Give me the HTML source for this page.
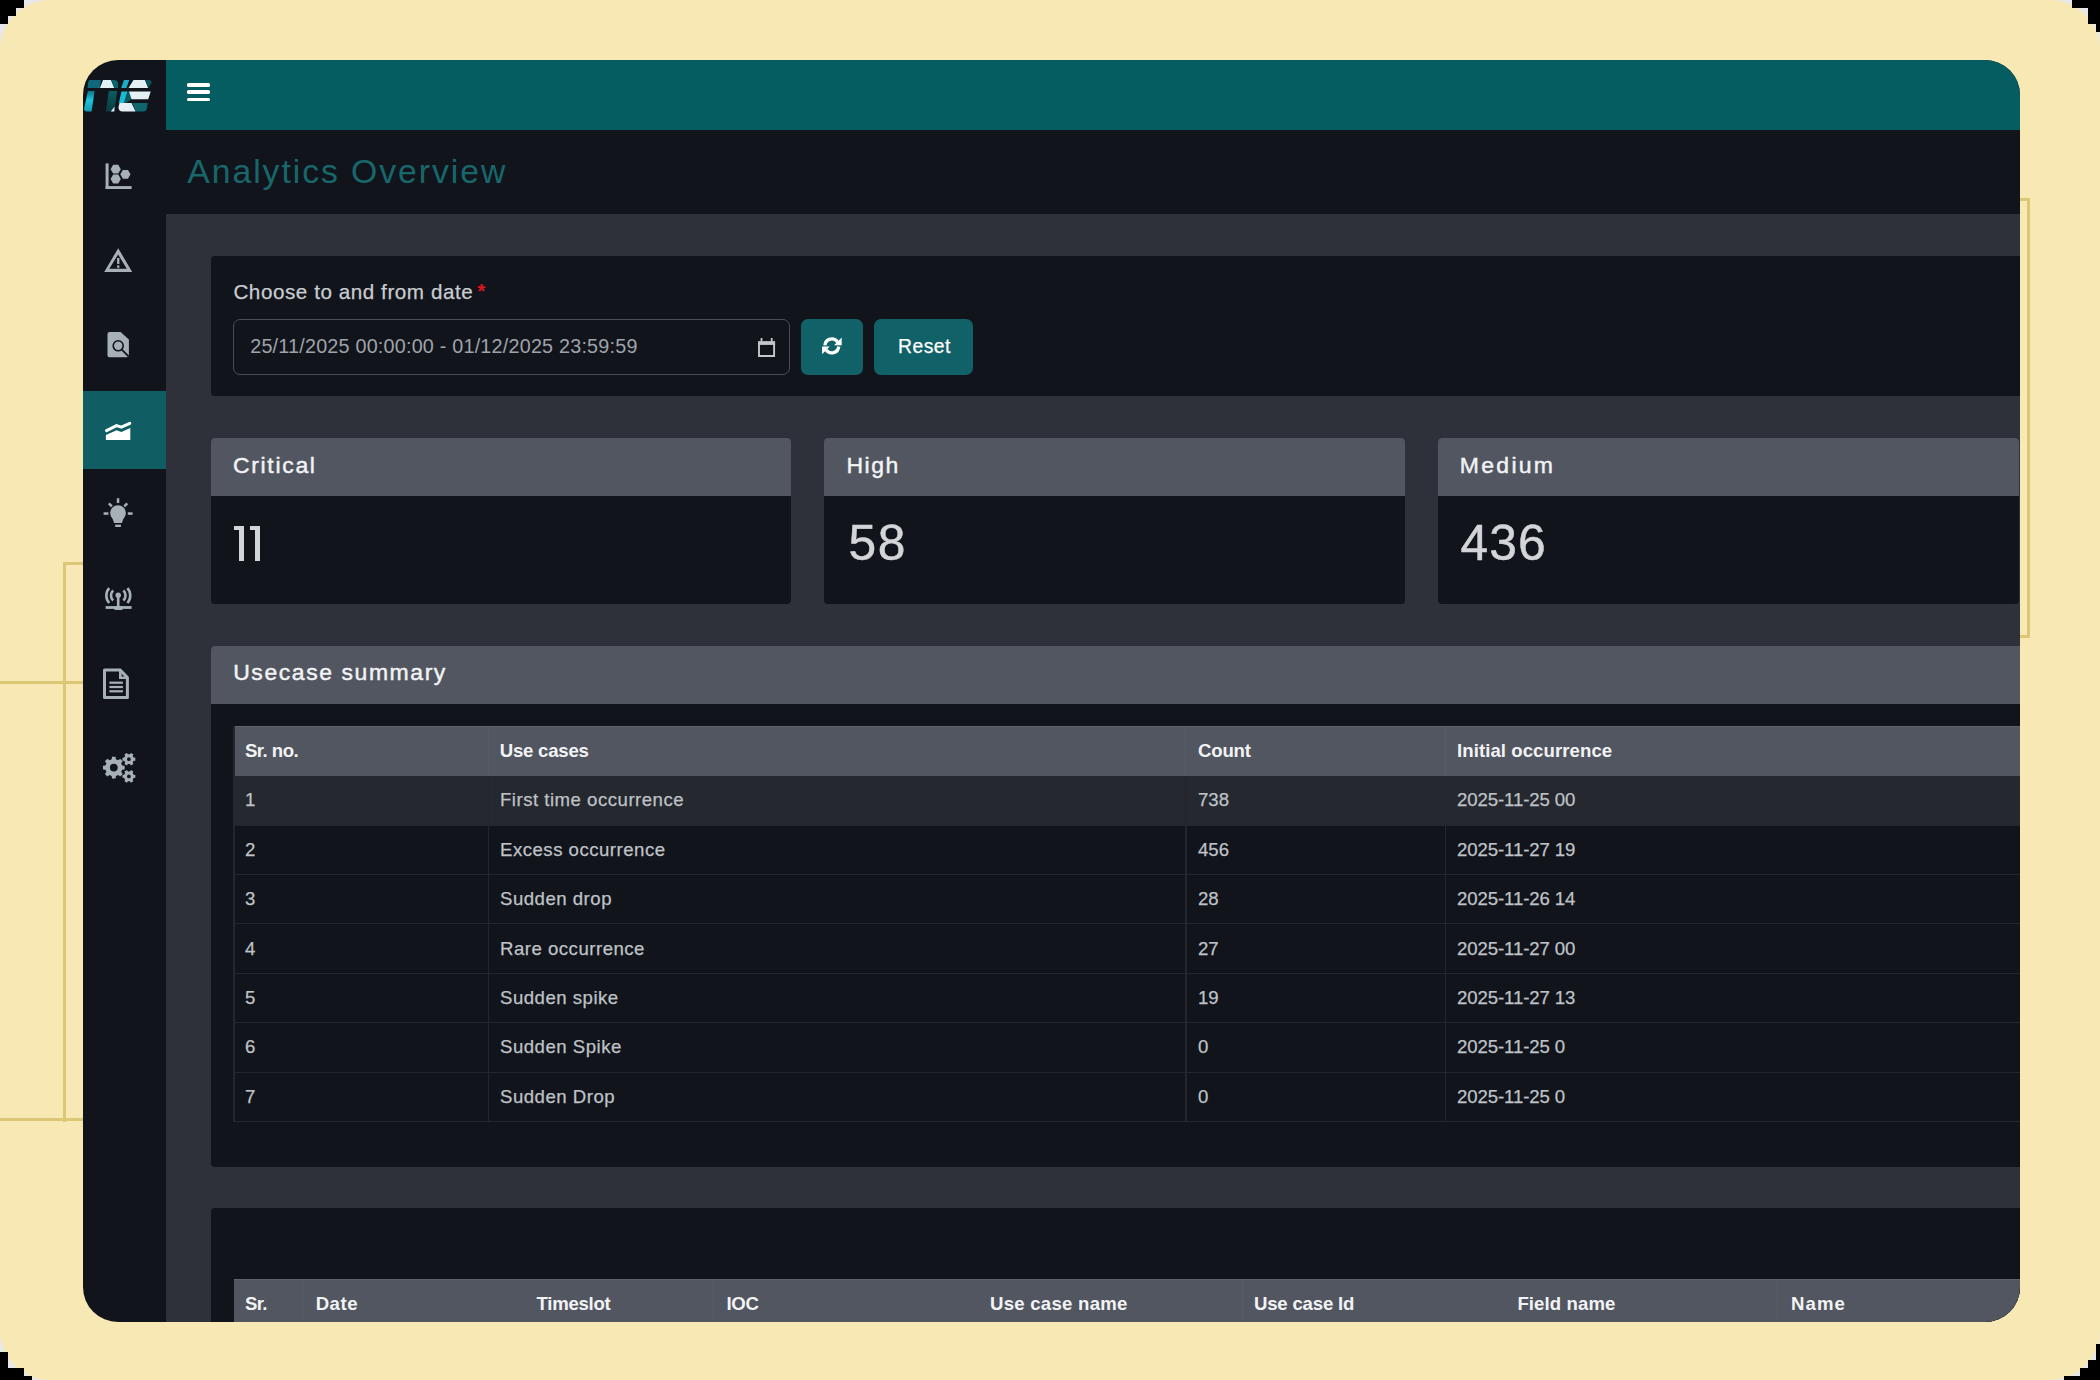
<!DOCTYPE html>
<html><head><meta charset="utf-8">
<style>
*{box-sizing:border-box;margin:0;padding:0}
html,body{width:2100px;height:1380px;overflow:hidden;background:#e8e7e9;font-family:"Liberation Sans",sans-serif}
.abs{position:absolute}
#outer{position:absolute;left:0;top:0;width:2100px;height:1380px;background:#f8e8b3;border-radius:50px}
.blk{position:absolute;background:#000}
.gl{position:absolute;background:#dcc777}
#frame{position:absolute;left:83px;top:60px;width:1937px;height:1262px;border-radius:35px;overflow:hidden;background:#11141b}
#in{position:absolute;left:-83px;top:-60px;width:2100px;height:1380px}
.r{position:absolute}
.t{position:absolute;white-space:nowrap;line-height:1}
</style></head><body>
<div id="outer"></div>
<div class="blk" style="left:0;top:0;width:24px;height:8px"></div>
<div class="blk" style="left:0;top:0;width:16px;height:16px"></div>
<div class="blk" style="left:0;top:0;width:8px;height:24px"></div>
<div class="blk" style="left:2072px;top:0;width:28px;height:8px"></div>
<div class="blk" style="left:2088px;top:0;width:12px;height:24px"></div>
<div class="blk" style="left:2096px;top:0;width:4px;height:32px"></div>
<div class="blk" style="left:0;top:1352px;width:8px;height:28px"></div>
<div class="blk" style="left:0;top:1368px;width:24px;height:12px"></div>
<div class="blk" style="left:0;top:1376px;width:32px;height:4px"></div>
<div class="blk" style="left:2096px;top:1344px;width:4px;height:36px"></div>
<div class="blk" style="left:2088px;top:1360px;width:12px;height:20px"></div>
<div class="blk" style="left:2080px;top:1368px;width:20px;height:12px"></div>
<div class="blk" style="left:2064px;top:1376px;width:36px;height:4px"></div>
<div class="gl" style="left:63px;top:562px;width:3px;height:560px"></div>
<div class="gl" style="left:63px;top:562px;width:22px;height:3px"></div>
<div class="gl" style="left:0;top:681px;width:85px;height:3px"></div>
<div class="gl" style="left:0;top:1118px;width:85px;height:3px"></div>
<div class="gl" style="left:2027px;top:198px;width:3px;height:440px"></div>
<div class="gl" style="left:2015px;top:198px;width:15px;height:3px"></div>
<div class="gl" style="left:2015px;top:635px;width:15px;height:3px"></div>
<div id="frame"><div id="in">
<div class="r" style="left:166px;top:60px;width:1854px;height:70px;background:#055c61;"></div>
<div class="r" style="left:166px;top:214px;width:1854px;height:1108px;background:#2f313a;"></div>
<div class="r" style="left:83px;top:391px;width:83px;height:78px;background:#105e64;"></div>
<div class="r" style="left:186.7px;top:82.8px;width:23.80000000000001px;height:4.0px;background:#ffffff;border-radius:1.5px"></div>
<div class="r" style="left:186.7px;top:90.3px;width:23.80000000000001px;height:3.799999999999997px;background:#ffffff;border-radius:1.5px"></div>
<div class="r" style="left:186.7px;top:97.7px;width:23.80000000000001px;height:3.299999999999997px;background:#ffffff;border-radius:1.5px"></div>
<div class="r" style="left:211px;top:255.5px;width:1819px;height:140.5px;background:#11141b;border-radius:4px"></div>
<div class="r" style="left:232.5px;top:319.3px;width:557.5px;height:55.39999999999998px;background:transparent;border:1.4px solid #4a4d55;border-radius:7px"></div>
<div class="r" style="left:800.5px;top:319.3px;width:62.5px;height:55.39999999999998px;background:#116168;border-radius:7px"></div>
<div class="r" style="left:874px;top:319.3px;width:98.79999999999995px;height:55.39999999999998px;background:#116168;border-radius:7px"></div>
<div class="r" style="left:211px;top:437.5px;width:580px;height:166.5px;background:#11141b;border-radius:4px;overflow:hidden"></div>
<div class="r" style="left:211px;top:437.5px;width:580px;height:58.30000000000001px;background:#525660;border-radius:4px 4px 0 0"></div>
<div class="r" style="left:824px;top:437.5px;width:581px;height:166.5px;background:#11141b;border-radius:4px;overflow:hidden"></div>
<div class="r" style="left:824px;top:437.5px;width:581px;height:58.30000000000001px;background:#525660;border-radius:4px 4px 0 0"></div>
<div class="r" style="left:1438px;top:437.5px;width:581px;height:166.5px;background:#11141b;border-radius:4px;overflow:hidden"></div>
<div class="r" style="left:1438px;top:437.5px;width:581px;height:58.30000000000001px;background:#525660;border-radius:4px 4px 0 0"></div>
<div class="r" style="left:211px;top:645.5px;width:1819px;height:521.5px;background:#11141b;border-radius:4px"></div>
<div class="r" style="left:211px;top:645.5px;width:1819px;height:58.10000000000002px;background:#525660;border-radius:4px 4px 0 0"></div>
<div class="r" style="left:233.5px;top:725.7px;width:1796.5px;height:50.19999999999993px;background:#525660;"></div>
<div class="r" style="left:233.5px;top:725.7px;width:1796.5px;height:1.1999999999999318px;background:#5f636c;"></div>
<div class="r" style="left:233.5px;top:775.7px;width:1796.5px;height:50.0px;background:#25282e;"></div>
<div class="r" style="left:233.5px;top:824.7px;width:1796.5px;height:1.0px;background:#23262d;"></div>
<div class="r" style="left:233.5px;top:873.9px;width:1796.5px;height:1.0px;background:#23262d;"></div>
<div class="r" style="left:233.5px;top:923.3px;width:1796.5px;height:1.0px;background:#23262d;"></div>
<div class="r" style="left:233.5px;top:972.6px;width:1796.5px;height:1.0px;background:#23262d;"></div>
<div class="r" style="left:233.5px;top:1022.0px;width:1796.5px;height:1.0px;background:#23262d;"></div>
<div class="r" style="left:233.5px;top:1071.5px;width:1796.5px;height:1.0px;background:#23262d;"></div>
<div class="r" style="left:233.5px;top:1121.4px;width:1796.5px;height:1.0px;background:#23262d;"></div>
<div class="r" style="left:233.0px;top:725.7px;width:1.5px;height:396.70000000000005px;background:#23262d;"></div>
<div class="r" style="left:487.8px;top:775.7px;width:1.5px;height:346.70000000000005px;background:#23262d;"></div>
<div class="r" style="left:487.8px;top:725.7px;width:1.0px;height:50.0px;background:#575b65;"></div>
<div class="r" style="left:1185.3px;top:775.7px;width:1.5px;height:346.70000000000005px;background:#23262d;"></div>
<div class="r" style="left:1185.3px;top:725.7px;width:1.0px;height:50.0px;background:#575b65;"></div>
<div class="r" style="left:1444.7px;top:775.7px;width:1.5px;height:346.70000000000005px;background:#23262d;"></div>
<div class="r" style="left:1444.7px;top:725.7px;width:1.0px;height:50.0px;background:#575b65;"></div>
<div class="r" style="left:211px;top:1208px;width:1819px;height:192px;background:#11141b;border-radius:4px"></div>
<div class="r" style="left:233.5px;top:1278.7px;width:1796.5px;height:121.29999999999995px;background:#525660;"></div>
<div class="r" style="left:233.5px;top:1278.7px;width:1796.5px;height:1.2000000000000455px;background:#5f636c;"></div>
<div class="r" style="left:302.4px;top:1278.7px;width:1.0px;height:121.29999999999995px;background:#575b65;"></div>
<div class="r" style="left:713.0px;top:1278.7px;width:1.0px;height:121.29999999999995px;background:#575b65;"></div>
<div class="r" style="left:1241.5px;top:1278.7px;width:1.0px;height:121.29999999999995px;background:#575b65;"></div>
<div class="r" style="left:1776.5px;top:1278.7px;width:1.0px;height:121.29999999999995px;background:#575b65;"></div>
<div class="r" style="left:233.6px;top:526px;width:6px;height:4.2px;background:#d3d5d8"></div>
<div class="r" style="left:239.2px;top:526px;width:4.8px;height:35px;background:#d3d5d8"></div>
<div class="r" style="left:249.7px;top:526px;width:6px;height:4.2px;background:#d3d5d8"></div>
<div class="r" style="left:255.3px;top:526px;width:4.8px;height:35px;background:#d3d5d8"></div>
<div class="t" id="title" style="left:187.30px;top:154.65px;font-size:33.72px;color:#17676c;font-weight:400;letter-spacing:1.95px;">Analytics Overview</div>
<div class="t" id="label" style="left:233.40px;top:282.12px;font-size:20.64px;color:#c9ccd0;font-weight:400;letter-spacing:0.56px;-webkit-text-stroke:0.25px currentColor;">Choose to and from date</div>
<div class="t" id="star" style="left:477.60px;top:281.99px;font-size:19.50px;color:#e0161e;font-weight:700;letter-spacing:0.00px;">*</div>
<div class="t" id="date" style="left:250.20px;top:337.46px;font-size:19.77px;color:#9fa3a9;font-weight:400;letter-spacing:0.21px;">25/11/2025 00:00:00 - 01/12/2025 23:59:59</div>
<div class="t" id="reset" style="left:898.00px;top:336.63px;font-size:19.33px;color:#ffffff;font-weight:400;letter-spacing:0.50px;-webkit-text-stroke:0.25px currentColor;">Reset</div>
<div class="t" id="crit" style="left:232.90px;top:454.16px;font-size:22.97px;color:#f2f3f5;font-weight:400;letter-spacing:1.70px;-webkit-text-stroke:0.45px currentColor;">Critical</div>
<div class="t" id="high" style="left:846.50px;top:454.16px;font-size:22.97px;color:#f2f3f5;font-weight:400;letter-spacing:1.50px;-webkit-text-stroke:0.45px currentColor;">High</div>
<div class="t" id="med" style="left:1459.80px;top:454.16px;font-size:22.97px;color:#f2f3f5;font-weight:400;letter-spacing:2.30px;-webkit-text-stroke:0.45px currentColor;">Medium</div>
<div class="t" id="n58" style="left:848.50px;top:519.41px;font-size:49.71px;color:#d3d5d8;font-weight:400;letter-spacing:1.50px;-webkit-text-stroke:0.5px currentColor;">58</div>
<div class="t" id="n436" style="left:1460.40px;top:519.41px;font-size:49.71px;color:#d3d5d8;font-weight:400;letter-spacing:1.20px;-webkit-text-stroke:0.5px currentColor;">436</div>
<div class="t" id="ucs" style="left:233.20px;top:661.26px;font-size:22.97px;color:#f2f3f5;font-weight:400;letter-spacing:1.57px;-webkit-text-stroke:0.45px currentColor;">Usecase summary</div>
<div class="t" id="h1" style="left:244.90px;top:741.55px;font-size:18.60px;color:#f2f3f5;font-weight:700;letter-spacing:-0.50px;">Sr. no.</div>
<div class="t" id="h2" style="left:499.80px;top:741.55px;font-size:18.60px;color:#f2f3f5;font-weight:700;letter-spacing:-0.24px;">Use cases</div>
<div class="t" id="h3" style="left:1198.00px;top:741.55px;font-size:18.60px;color:#f2f3f5;font-weight:700;letter-spacing:-0.20px;">Count</div>
<div class="t" id="h4" style="left:1457.00px;top:741.55px;font-size:18.60px;color:#f2f3f5;font-weight:700;letter-spacing:0.07px;">Initial occurrence</div>
<div class="t" id="r0c0" style="left:245.00px;top:790.95px;font-size:18.60px;color:#bfc2c7;font-weight:400;letter-spacing:0.00px;-webkit-text-stroke:0.25px currentColor;">1</div>
<div class="t" id="r0c1" style="left:500.00px;top:790.95px;font-size:18.60px;color:#bfc2c7;font-weight:400;letter-spacing:0.50px;-webkit-text-stroke:0.25px currentColor;">First time occurrence</div>
<div class="t" id="r0c2" style="left:1198.00px;top:790.95px;font-size:18.60px;color:#bfc2c7;font-weight:400;letter-spacing:0.00px;-webkit-text-stroke:0.25px currentColor;">738</div>
<div class="t" id="r0c3" style="left:1457.00px;top:790.95px;font-size:18.60px;color:#bfc2c7;font-weight:400;letter-spacing:-0.10px;-webkit-text-stroke:0.25px currentColor;">2025-11-25 00</div>
<div class="t" id="r1c0" style="left:245.00px;top:840.95px;font-size:18.60px;color:#bfc2c7;font-weight:400;letter-spacing:0.00px;-webkit-text-stroke:0.25px currentColor;">2</div>
<div class="t" id="r1c1" style="left:500.00px;top:840.95px;font-size:18.60px;color:#bfc2c7;font-weight:400;letter-spacing:0.50px;-webkit-text-stroke:0.25px currentColor;">Excess occurrence</div>
<div class="t" id="r1c2" style="left:1198.00px;top:840.95px;font-size:18.60px;color:#bfc2c7;font-weight:400;letter-spacing:0.00px;-webkit-text-stroke:0.25px currentColor;">456</div>
<div class="t" id="r1c3" style="left:1457.00px;top:840.95px;font-size:18.60px;color:#bfc2c7;font-weight:400;letter-spacing:-0.10px;-webkit-text-stroke:0.25px currentColor;">2025-11-27 19</div>
<div class="t" id="r2c0" style="left:245.00px;top:890.15px;font-size:18.60px;color:#bfc2c7;font-weight:400;letter-spacing:0.00px;-webkit-text-stroke:0.25px currentColor;">3</div>
<div class="t" id="r2c1" style="left:500.00px;top:890.15px;font-size:18.60px;color:#bfc2c7;font-weight:400;letter-spacing:0.50px;-webkit-text-stroke:0.25px currentColor;">Sudden drop</div>
<div class="t" id="r2c2" style="left:1198.00px;top:890.15px;font-size:18.60px;color:#bfc2c7;font-weight:400;letter-spacing:0.00px;-webkit-text-stroke:0.25px currentColor;">28</div>
<div class="t" id="r2c3" style="left:1457.00px;top:890.15px;font-size:18.60px;color:#bfc2c7;font-weight:400;letter-spacing:-0.10px;-webkit-text-stroke:0.25px currentColor;">2025-11-26 14</div>
<div class="t" id="r3c0" style="left:245.00px;top:939.55px;font-size:18.60px;color:#bfc2c7;font-weight:400;letter-spacing:0.00px;-webkit-text-stroke:0.25px currentColor;">4</div>
<div class="t" id="r3c1" style="left:500.00px;top:939.55px;font-size:18.60px;color:#bfc2c7;font-weight:400;letter-spacing:0.50px;-webkit-text-stroke:0.25px currentColor;">Rare occurrence</div>
<div class="t" id="r3c2" style="left:1198.00px;top:939.55px;font-size:18.60px;color:#bfc2c7;font-weight:400;letter-spacing:0.00px;-webkit-text-stroke:0.25px currentColor;">27</div>
<div class="t" id="r3c3" style="left:1457.00px;top:939.55px;font-size:18.60px;color:#bfc2c7;font-weight:400;letter-spacing:-0.10px;-webkit-text-stroke:0.25px currentColor;">2025-11-27 00</div>
<div class="t" id="r4c0" style="left:245.00px;top:988.85px;font-size:18.60px;color:#bfc2c7;font-weight:400;letter-spacing:0.00px;-webkit-text-stroke:0.25px currentColor;">5</div>
<div class="t" id="r4c1" style="left:500.00px;top:988.85px;font-size:18.60px;color:#bfc2c7;font-weight:400;letter-spacing:0.50px;-webkit-text-stroke:0.25px currentColor;">Sudden spike</div>
<div class="t" id="r4c2" style="left:1198.00px;top:988.85px;font-size:18.60px;color:#bfc2c7;font-weight:400;letter-spacing:0.00px;-webkit-text-stroke:0.25px currentColor;">19</div>
<div class="t" id="r4c3" style="left:1457.00px;top:988.85px;font-size:18.60px;color:#bfc2c7;font-weight:400;letter-spacing:-0.10px;-webkit-text-stroke:0.25px currentColor;">2025-11-27 13</div>
<div class="t" id="r5c0" style="left:245.00px;top:1038.25px;font-size:18.60px;color:#bfc2c7;font-weight:400;letter-spacing:0.00px;-webkit-text-stroke:0.25px currentColor;">6</div>
<div class="t" id="r5c1" style="left:500.00px;top:1038.25px;font-size:18.60px;color:#bfc2c7;font-weight:400;letter-spacing:0.50px;-webkit-text-stroke:0.25px currentColor;">Sudden Spike</div>
<div class="t" id="r5c2" style="left:1198.00px;top:1038.25px;font-size:18.60px;color:#bfc2c7;font-weight:400;letter-spacing:0.00px;-webkit-text-stroke:0.25px currentColor;">0</div>
<div class="t" id="r5c3" style="left:1457.00px;top:1038.25px;font-size:18.60px;color:#bfc2c7;font-weight:400;letter-spacing:-0.10px;-webkit-text-stroke:0.25px currentColor;">2025-11-25 0</div>
<div class="t" id="r6c0" style="left:245.00px;top:1087.75px;font-size:18.60px;color:#bfc2c7;font-weight:400;letter-spacing:0.00px;-webkit-text-stroke:0.25px currentColor;">7</div>
<div class="t" id="r6c1" style="left:500.00px;top:1087.75px;font-size:18.60px;color:#bfc2c7;font-weight:400;letter-spacing:0.50px;-webkit-text-stroke:0.25px currentColor;">Sudden Drop</div>
<div class="t" id="r6c2" style="left:1198.00px;top:1087.75px;font-size:18.60px;color:#bfc2c7;font-weight:400;letter-spacing:0.00px;-webkit-text-stroke:0.25px currentColor;">0</div>
<div class="t" id="r6c3" style="left:1457.00px;top:1087.75px;font-size:18.60px;color:#bfc2c7;font-weight:400;letter-spacing:-0.10px;-webkit-text-stroke:0.25px currentColor;">2025-11-25 0</div>
<div class="t" id="b1" style="left:245.00px;top:1294.75px;font-size:18.60px;color:#f2f3f5;font-weight:700;letter-spacing:-0.70px;">Sr.</div>
<div class="t" id="b2" style="left:315.70px;top:1294.75px;font-size:18.60px;color:#f2f3f5;font-weight:700;letter-spacing:0.50px;">Date</div>
<div class="t" id="b3" style="left:536.50px;top:1294.75px;font-size:18.60px;color:#f2f3f5;font-weight:700;letter-spacing:-0.28px;">Timeslot</div>
<div class="t" id="b4" style="left:726.40px;top:1294.75px;font-size:18.60px;color:#f2f3f5;font-weight:700;letter-spacing:-0.20px;">IOC</div>
<div class="t" id="b5" style="left:990.00px;top:1294.75px;font-size:18.60px;color:#f2f3f5;font-weight:700;letter-spacing:0.25px;">Use case name</div>
<div class="t" id="b6" style="left:1254.00px;top:1294.75px;font-size:18.60px;color:#f2f3f5;font-weight:700;letter-spacing:-0.20px;">Use case Id</div>
<div class="t" id="b7" style="left:1517.40px;top:1294.75px;font-size:18.60px;color:#f2f3f5;font-weight:700;letter-spacing:0.10px;">Field name</div>
<div class="t" id="b8" style="left:1791.00px;top:1294.75px;font-size:18.60px;color:#f2f3f5;font-weight:700;letter-spacing:1.10px;">Name</div>
<svg class="abs" style="left:0;top:0" width="2100" height="1380" viewBox="0 0 2100 1380">
 <!-- scatter chart -->
 <g fill="#a8b0b7">
  <rect x="105.6" y="163.4" width="3" height="25.6"/>
  <rect x="105.6" y="186.1" width="26" height="2.9"/>
  <path d="M120.80,169.20 L118.25,173.62 L113.15,173.62 L110.60,169.20 L113.15,164.78 L118.25,164.78 Z"/>
  <path d="M120.80,179.00 L118.25,183.42 L113.15,183.42 L110.60,179.00 L113.15,174.58 L118.25,174.58 Z"/>
  <path d="M130.50,174.30 L127.95,178.72 L122.85,178.72 L120.30,174.30 L122.85,169.88 L127.95,169.88 Z"/>
 </g>
 <!-- warning -->
 <path fill="#a8b0b7" fill-rule="evenodd" d="M118.2,248.2 L132.2,272 L104.2,272 Z M118.1,254.4 L109.3,268.8 L126.8,268.8 Z"/>
 <rect fill="#a8b0b7" x="117.1" y="258" width="2.3" height="6"/>
 <rect fill="#a8b0b7" x="117.1" y="265.4" width="2.3" height="2.4"/>
 <!-- file search -->
 <path fill="#a8b0b7" fill-rule="evenodd" d="M109.5,332 L120.6,332 L128.9,339.4 L128.9,355.3 Q128.9,357.3 126.9,357.3 L109.5,357.3 Q107.5,357.3 107.5,355.3 L107.5,334 Q107.5,332 109.5,332 Z"/>
 <circle cx="118.2" cy="345.8" r="5.0" fill="none" stroke="#11141b" stroke-width="1.6"/>
 <line x1="121.8" y1="349.6" x2="128.6" y2="356.4" stroke="#11141b" stroke-width="1.8"/>
 <!-- file text outline -->
 <path fill="none" stroke="#a8b0b7" stroke-width="3" stroke-linejoin="round" d="M105,670 L120.2,670 L127.4,677.6 L127.4,697.5 L104.5,697.5 L104.5,670 Z"/>
 <path fill="none" stroke="#a8b0b7" stroke-width="2.6" d="M120.3,670 L120.3,677.8 L127.4,677.8"/>
 <rect fill="#a8b0b7" x="109.4" y="681.6" width="13.5" height="2.2"/>
 <rect fill="#a8b0b7" x="109.4" y="685.9" width="13.5" height="2.2"/>
 <rect fill="#a8b0b7" x="109.4" y="690.2" width="13.5" height="2.2"/>
 <!-- broadcast -->
 <g fill="none" stroke="#a8b0b7" stroke-width="2.6" stroke-linecap="butt">
  <path d="M109.2,588.2 A11,11 0 0,0 109.2,603"/>
  <path d="M127.4,588.2 A11,11 0 0,1 127.4,603"/>
  <path d="M113.2,590.6 A6.5,6.5 0 0,0 113.2,600.4"/>
  <path d="M123.3,590.6 A6.5,6.5 0 0,1 123.3,600.4"/>
 </g>
 <circle cx="118.2" cy="595.2" r="2.7" fill="#a8b0b7"/>
 <rect fill="#a8b0b7" x="116.9" y="597" width="2.6" height="10"/>
 <rect fill="#a8b0b7" x="105.6" y="606.1" width="26" height="2.8"/>
 <rect fill="#a8b0b7" x="114.5" y="606" width="8" height="4"/>
 <!-- lightbulb -->
 <g fill="#a8b0b7">
  <path d="M118,505.2 A7.9,7.9 0 0,1 125.9,513.1 Q125.9,516.3 123.2,519.2 L121.9,523.1 L114.1,523.1 L112.8,519.2 Q110.1,516.3 110.1,513.1 A7.9,7.9 0 0,1 118,505.2 Z"/>
  <rect x="115.2" y="524.6" width="5.7" height="2.4"/>
  <rect x="116.8" y="498.2" width="2.5" height="4.8"/>
  <rect x="103.6" y="512.3" width="4.8" height="2.5"/>
  <rect x="127.8" y="512.3" width="4.8" height="2.5"/>
  <rect x="108.3" y="503.6" width="4.2" height="2.5" transform="rotate(45 110.4 504.8)"/>
  <rect x="123.6" y="503.6" width="4.2" height="2.5" transform="rotate(-45 125.7 504.8)"/>
 </g>
 <!-- gears -->
 <path fill="#a8b0b7" fill-rule="evenodd" d="M122.15,765.53 L124.65,765.79 L124.65,769.41 L122.15,769.67 L121.17,772.04 L122.75,774.00 L120.20,776.55 L118.24,774.97 L115.87,775.95 L115.61,778.45 L111.99,778.45 L111.73,775.95 L109.36,774.97 L107.40,776.55 L104.85,774.00 L106.43,772.04 L105.45,769.67 L102.95,769.41 L102.95,765.79 L105.45,765.53 L106.43,763.16 L104.85,761.20 L107.40,758.65 L109.36,760.23 L111.73,759.25 L111.99,756.75 L115.61,756.75 L115.87,759.25 L118.24,760.23 L120.20,758.65 L122.75,761.20 L121.17,763.16 Z M109.90,767.60 a3.90,3.90 0 1,0 7.80,0 a3.90,3.90 0 1,0 -7.80,0 Z"/>
 <path fill="#a8b0b7" fill-rule="evenodd" d="M133.64,757.61 L135.34,757.76 L135.34,760.64 L133.64,760.79 L132.65,762.51 L133.37,764.06 L130.87,765.50 L129.89,764.10 L127.91,764.10 L126.93,765.50 L124.43,764.06 L125.15,762.51 L124.16,760.79 L122.46,760.64 L122.46,757.76 L124.16,757.61 L125.15,755.89 L124.43,754.34 L126.93,752.90 L127.91,754.30 L129.89,754.30 L130.87,752.90 L133.37,754.34 L132.65,755.89 Z M127.00,759.20 a1.90,1.90 0 1,0 3.80,0 a1.90,1.90 0 1,0 -3.80,0 Z"/>
 <path fill="#a8b0b7" fill-rule="evenodd" d="M133.64,774.81 L135.34,774.96 L135.34,777.84 L133.64,777.99 L132.65,779.71 L133.37,781.26 L130.87,782.70 L129.89,781.30 L127.91,781.30 L126.93,782.70 L124.43,781.26 L125.15,779.71 L124.16,777.99 L122.46,777.84 L122.46,774.96 L124.16,774.81 L125.15,773.09 L124.43,771.54 L126.93,770.10 L127.91,771.50 L129.89,771.50 L130.87,770.10 L133.37,771.54 L132.65,773.09 Z M127.00,776.40 a1.90,1.90 0 1,0 3.80,0 a1.90,1.90 0 1,0 -3.80,0 Z"/>
 <!-- chart area (active) -->
 <path fill="#ffffff" d="M105.9,434.9 L116.6,430.2 L121.3,432 L130.3,428 L130.3,440.1 L105.9,440.1 Z"/>
 <path fill="none" stroke="#ffffff" stroke-width="3" stroke-linecap="round" stroke-linejoin="round" d="M106.5,430.6 L116.6,425.6 L121.3,427.2 L129.8,423.4"/>
</svg>
<svg class="abs" style="left:0;top:0" width="2100" height="1380" viewBox="0 0 2100 1380">
 <defs>
  <linearGradient id="lg1" x1="0" y1="0" x2="0" y2="1"><stop offset="0" stop-color="#127584"/><stop offset="0.45" stop-color="#1cc3dc"/><stop offset="1" stop-color="#129aae"/></linearGradient>
  <linearGradient id="lg2" x1="0" y1="0" x2="0" y2="1"><stop offset="0" stop-color="#0d5c60"/><stop offset="1" stop-color="#083c40"/></linearGradient>
 </defs>
 <path fill="#10697a" d="M90,80 L101,80 L100,88 L87.5,88 L88.2,82 Q88.5,80 90,80 Z"/>
 <path fill="#e4f1f4" d="M103,80 L111,80 L114.3,88 L100,88 Z"/>
 <path fill="#0d616a" d="M111,80 L114.5,80 Q118.4,80.3 118.3,84.5 L118,88 L114.3,88 Z"/>
 <path fill="#1aaecb" d="M124,80 L129.3,80 L126.4,88 L121.2,88 Z"/>
 <path fill="#e4f1f4" d="M133.5,80 L145,80 L148.2,88 L128.5,88 Z"/>
 <path fill="#0b5056" d="M145,80 L149.5,80 Q152,80.4 151.3,83.5 L148.2,88 Z"/>
 <path fill="url(#lg1)" d="M87.9,91 L94.6,91 L91.6,111.5 L86.5,111.5 Q83.8,111.2 84.1,108.6 Z"/>
 <path fill="url(#lg2)" d="M108.8,91 L117.2,91 L114.3,111.5 L105.9,111.5 Z"/>
 <path fill="#d8ecef" d="M110.8,111.5 L114.6,106.5 L114.3,111.5 Z"/>
 <path fill="#0c5a60" d="M126,91.4 L129,91.4 L131.5,99.3 L126,103.1 L123.5,103.1 Z"/>
 <path fill="#1ab9d4" d="M121.4,91.4 L127.3,91.4 L123.9,103.1 L118.9,103.1 Z"/>
 <path fill="#e4f1f4" d="M129,91.4 L150.7,91.4 L148.2,99.3 L131.5,99.3 Z"/>
 <path fill="#e6eef5" d="M119.5,103.1 L131.5,103.1 L135.6,111.5 L122.5,111.5 Q118.3,111.3 118.5,107 Z"/>
 <path fill="#0f666d" d="M132.3,103.1 L147.8,103.1 L146.6,109 Q146,111.5 143.5,111.5 L135.6,111.5 Z"/>
</svg>
<svg class="abs" style="left:0;top:0" width="2100" height="1380" viewBox="0 0 2100 1380">
 <!-- calendar -->
 <path fill="none" stroke="#c4c7cb" stroke-width="1.9" d="M759,342.4 L774.1,342.4 L774.1,356 L759,356 Z"/>
 <rect fill="#c4c7cb" x="758.1" y="341.3" width="17" height="3.6"/>
 <rect fill="#c4c7cb" x="760.6" y="338" width="1.8" height="3.5"/>
 <rect fill="#c4c7cb" x="770.8" y="338" width="1.8" height="3.5"/>
 <!-- refresh -->
 <g fill="none" stroke="#ffffff" stroke-width="3.3">
  <path d="M824.90,345.30 A6.9,6.9 0 0,1 837.45,341.94"/>
  <path d="M838.70,346.50 A6.9,6.9 0 0,1 826.15,349.86"/>
 </g>
 <path fill="#ffffff" d="M841.7,337.6 L841.7,345.2 L834.1,345.2 Z"/>
 <path fill="#ffffff" d="M822.1,354.2 L822.1,346.6 L829.7,346.6 Z"/>
</svg>
</div></div>
</body></html>
